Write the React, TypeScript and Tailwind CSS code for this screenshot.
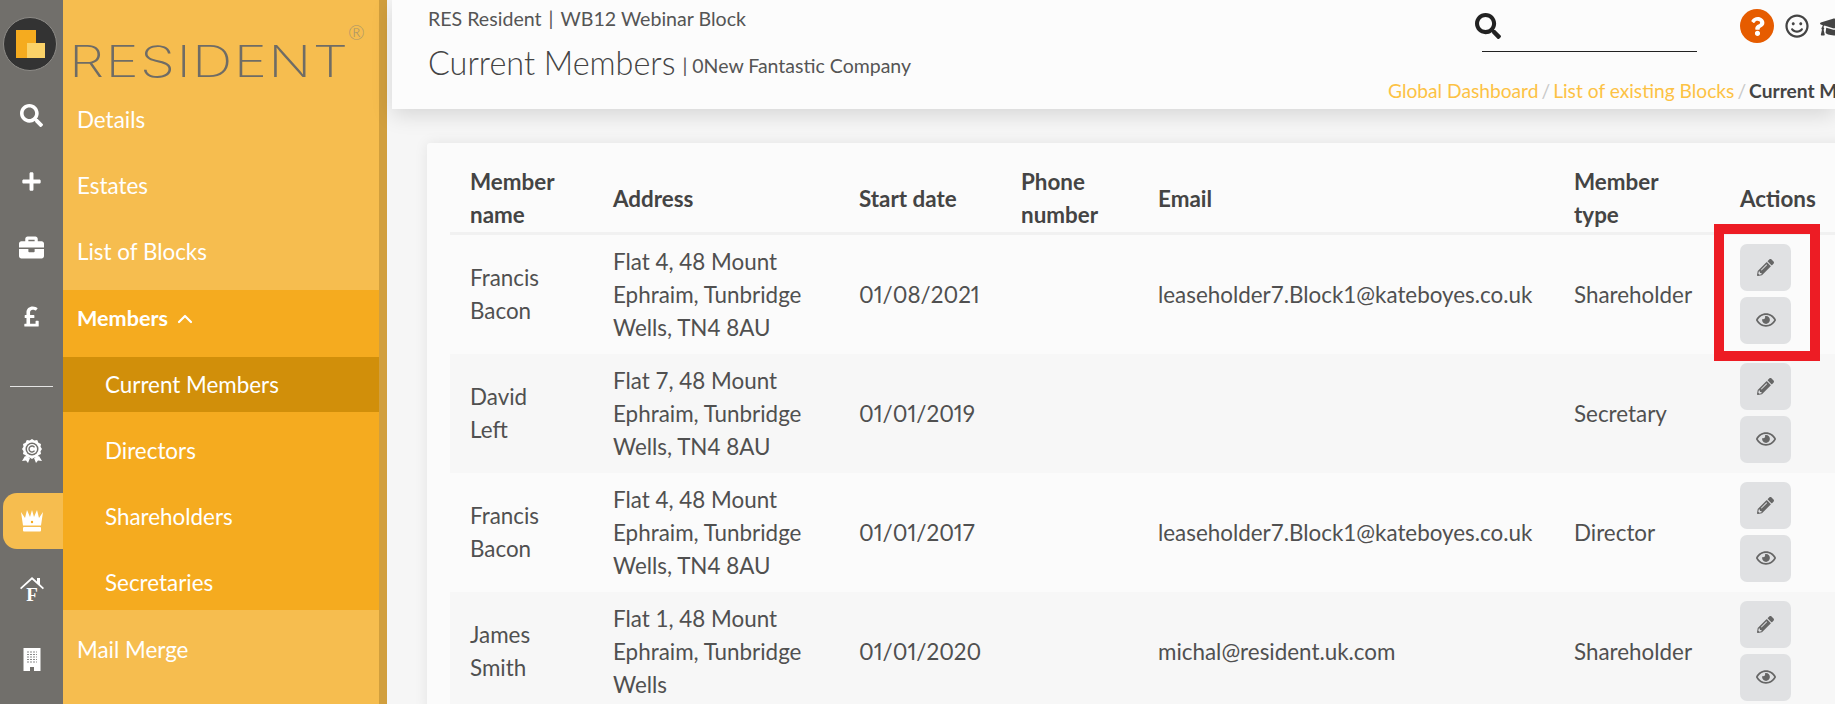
import { FaBriefcase, FaGraduationCap, FaPencilAlt, FaPlus, FaPoundSign, FaQuestion, FaRegEye, FaRegSmile, FaSearch } from 'react-icons/fa';
import { ChevronUp } from 'lucide-react';

const members = [
  { first: 'Francis', last: 'Bacon', flat: 'Flat 4', end: 'Wells, TN4 8AU', start: '01/08/2021', email: 'leaseholder7.Block1@kateboyes.co.uk', type: 'Shareholder' },
  { first: 'David', last: 'Left', flat: 'Flat 7', end: 'Wells, TN4 8AU', start: '01/01/2019', email: '', type: 'Secretary' },
  { first: 'Francis', last: 'Bacon', flat: 'Flat 4', end: 'Wells, TN4 8AU', start: '01/01/2017', email: 'leaseholder7.Block1@kateboyes.co.uk', type: 'Director' },
  { first: 'James', last: 'Smith', flat: 'Flat 1', end: 'Wells', start: '01/01/2020', email: 'michal@resident.uk.com', type: 'Shareholder' },
];

function AwardIcon() {
  return (
    <svg width="22" height="24" viewBox="0 0 22 24" fill="white">
      <path d="M11 0l2.400 1.600 2.800-.5 1.200 2.600 2.600 1.200-.5 2.800L21 10l-1.500 2.300.5 2.800-2.600 1.200-1.200 2.600-2.800-.5L11 20l-2.400-1.600-2.800.5-1.200-2.600L2 15.100l.5-2.800L1 10l1.500-2.300L2 4.900l2.600-1.200 1.200-2.600 2.800.5z" />
      <circle cx="11" cy="10" r="6.500" fill="#716f6b" />
      <circle cx="11" cy="10" r="5" fill="white" />
      <path d="M13.500 8.300a3 3 0 1 0 0 3.400" fill="none" stroke="#716f6b" strokeWidth="1.400" />
      <path d="M4 17l-3 5 4-.5 2 2.500 2-5zM18 17l3 5-4-.5-2 2.500-2-5z" />
    </svg>
  );
}

function HouseIcon() {
  return (
    <svg width="24" height="25" viewBox="0 0 24 25" fill="white">
      <path d="M0 12L12 1l5 4.500V2h3v6.300L24 12l-1.200 1.200L12 3.600 1.200 13.200z" />
      <text x="12" y="25" textAnchor="middle" fontFamily="Liberation Serif, serif" fontWeight="700" fontSize="19">F</text>
    </svg>
  );
}

function CrownIcon() {
  return (
    <svg width="24" height="22" viewBox="0 0 24 22" fill="white">
      <path d="M1 2l4 6 2-8 3 7 2-7 2 7 3-7 2 8 4-6-2 13.500H3z" />
      <circle cx="12" cy="12" r="1.200" fill="#f5ab1f" />
      <rect x="3" y="17" width="18" height="4.500" rx="1" />
    </svg>
  );
}

function BuildingIcon() {
  return (
    <svg width="18" height="24" viewBox="0 0 18 24">
      <rect width="17" height="23" x="0.500" fill="white" />
      <path d="M4 4h10M4 6.500h10M4 9h10M4 11.500h10M4 14h10" stroke="#8a8a8a" strokeWidth="1.200" strokeDasharray="2 1" />
      <rect x="7" y="19" width="4" height="4" fill="#716f6b" />
    </svg>
  );
}

function RailItem({ children, active = false }: { children: React.ReactNode; active?: boolean }) {
  return (
    <div className={active ? 'ml-[3px] flex h-[56px] items-center justify-center rounded-l-[14px] bg-[#f6bd4f] pr-[3px]' : 'flex h-[56px] items-center justify-center'}>
      {children}
    </div>
  );
}

function Rail() {
  return (
    <div className="flex w-[63px] shrink-0 flex-col bg-[#716f6b] text-white">
      <div className="mt-[17px] ml-[3px] flex h-[54px] w-[54px] items-center justify-center rounded-full border border-[#8d8b87] bg-[#333333]">
        <div className="relative h-[29px] w-[29px]">
          <div className="h-[28px] w-[20px] bg-[#f5ab1f]" />
          <div className="absolute right-0 bottom-[1px] h-[15px] w-[18px] bg-[#fbd268]" />
        </div>
      </div>
      <div className="mt-[16px] flex h-[56px] items-center justify-center"><FaSearch size={23} /></div>
      <div className="mt-[10px]"><RailItem><FaPlus size={21} /></RailItem></div>
      <div className="mt-[10px]"><RailItem><FaBriefcase size={25} /></RailItem></div>
      <div className="mt-[13px]"><RailItem><FaPoundSign size={23} /></RailItem></div>
      <div className="mx-[10px] mt-[42px] h-px bg-[#e4e4e4]" />
      <div className="mt-[36px]"><RailItem><AwardIcon /></RailItem></div>
      <div className="mt-[14px]"><RailItem active><CrownIcon /></RailItem></div>
      <div className="mt-[11px]"><RailItem><HouseIcon /></RailItem></div>
      <div className="mt-[16px]"><RailItem><BuildingIcon /></RailItem></div>
    </div>
  );
}

function NavItem({ label, sub = false, current = false, bold = false }: { label: string; sub?: boolean; current?: boolean; bold?: boolean }) {
  return (
    <div className={`flex h-[55px] items-start pt-[16px] leading-[24px] text-white ${sub ? 'pl-[42px]' : 'pl-[14px]'} ${current ? 'bg-[#d18f0a]' : ''} ${bold ? 'text-[21.6px] font-bold' : 'text-[22.4px]'}`}>
      {label}
      {bold && <ChevronUp className="ml-[5px] mt-[1px]" size={24} strokeWidth={2.2} />}
    </div>
  );
}

function Sidebar() {
  return (
    <div className="w-[324px] shrink-0 border-r-[8px] border-[#d19f3e] bg-[#f6bd4f]">
      <div className="relative h-[92px] pl-[6px] pt-[35px]">
        <div className="origin-left scale-x-[1.31] text-[43px] leading-[52px] font-extralight tracking-[1px] text-[#6f6c65] font-['Inter']">RESIDENT</div>
        <div className="absolute top-[17px] left-[285px] text-[20px] font-light text-[#a8946a]">®</div>
      </div>
      <div className="flex flex-col gap-[11px]">
        <NavItem label="Details" />
        <NavItem label="Estates" />
        <NavItem label="List of Blocks" />
        <div className="flex flex-col gap-[11px] bg-[#f5ab1f]">
          <div className="pb-px"><NavItem label="Members" bold /></div>
          <NavItem label="Current Members" sub current />
          <NavItem label="Directors" sub />
          <NavItem label="Shareholders" sub />
          <NavItem label="Secretaries" sub />
        </div>
        <div className="mt-px pb-[27px]"><NavItem label="Mail Merge" /></div>
      </div>
    </div>
  );
}

function Header() {
  return (
    <div className="ml-[5px] flex h-[109px] bg-[#fcfcfc] shadow-[0_6px_20px_rgba(0,0,0,0.13)]">
      <div className="w-[996px] shrink-0 pl-[36px] pt-[7px] text-[#555555]">
        <div className="text-[19.6px] leading-[24px]">RES Resident<span className="mx-[7px]">|</span>WB12 Webinar Block</div>
        <div className="mt-[13px] flex items-baseline">
          <span className="text-[32.4px] leading-[38px] font-light text-[#444444]">Current Members</span>
          <span className="ml-[7px] -translate-y-[2px] text-[19.5px]">| 0New Fantastic Company</span>
        </div>
      </div>
      <div className="min-w-0 flex-1 overflow-hidden">
        <div className="flex h-[63px]">
          <div className="relative w-[317px] shrink-0">
            <FaSearch className="absolute top-[13px] left-[87px] text-[#222222]" size={26} />
            <div className="absolute top-[51px] left-[94px] h-px w-[215px] bg-[#222222]" />
          </div>
          <div className="mt-[9px] ml-[35px] flex h-[34px] w-[34px] shrink-0 items-center justify-center rounded-full bg-[#e65c00] text-white"><FaQuestion size={19} /></div>
          <FaRegSmile className="mt-[14px] ml-[11px] shrink-0 text-[#444444]" size={24} />
          <FaGraduationCap className="mt-[13px] ml-[11px] shrink-0 text-[#444444]" size={28} />
        </div>
        <div className="mt-[16px] whitespace-nowrap text-[19.2px] leading-[24px] text-[#fcc244]">
          <span>Global Dashboard</span>
          <span className="mx-[3px] text-[#c8c8c8]">/</span>
          <span>List of existing Blocks</span>
          <span className="mx-[3px] text-[#c8c8c8]">/</span>
          <span className="font-bold text-[#444444]">Current Members</span>
        </div>
      </div>
    </div>
  );
}

function ActionButton({ children }: { children: React.ReactNode }) {
  return <div className="flex h-[47px] w-[51px] items-center justify-center rounded-[7px] bg-[#e0e1e3] text-[#666666]">{children}</div>;
}

function MemberTable() {
  return (
    <div className="mt-[34px] ml-[40px] mr-[-20px] overflow-hidden rounded-t-[3px] bg-[#fbfbfb] pl-[23px] pt-[22px] shadow-[0_0_14px_rgba(0,0,0,0.08)]">
      <table className="w-full table-fixed border-collapse text-left text-[22.4px] leading-[33px] text-[#505050]">
        <colgroup>
          <col className="w-[139px]" />
          <col className="w-[246px]" />
          <col className="w-[162px]" />
          <col className="w-[137px]" />
          <col className="w-[416px]" />
          <col className="w-[167px]" />
          <col />
        </colgroup>
        <thead>
          <tr className="h-[68px] border-b-[3px] border-[#f1f1f1] align-middle text-[#444444]">
            <th className="pl-[20px] font-bold">Member name</th>
            <th className="pl-[24px] font-bold">Address</th>
            <th className="pl-[24px] font-bold">Start date</th>
            <th className="pl-[24px] font-bold">Phone number</th>
            <th className="pl-[24px] font-bold">Email</th>
            <th className="pl-[24px] font-bold">Member<br />type</th>
            <th className="pl-[23px] font-bold">Actions</th>
          </tr>
        </thead>
        <tbody>
          {members.map((m, i) => (
            <tr key={i} className={i % 2 === 0 ? 'bg-[#fbfbfb]' : 'bg-[#f7f7f7]'}>
              <td className="pl-[20px]">{m.first}<br />{m.last}</td>
              <td className="pl-[24px]">{m.flat}, 48 Mount<br />Ephraim, Tunbridge<br />{m.end}</td>
              <td className="pl-[24px] proportional-nums">{m.start}</td>
              <td className="pl-[24px]" />
              <td className="pl-[24px]">{m.email}</td>
              <td className="pl-[24px]">{m.type}</td>
              <td className="pl-[23px]">
                <div className="flex flex-col gap-[6px] pt-[9px] pb-[10px]">
                  <ActionButton><FaPencilAlt size={17} /></ActionButton>
                  <ActionButton><FaRegEye size={20} /></ActionButton>
                </div>
              </td>
            </tr>
          ))}
        </tbody>
      </table>
    </div>
  );
}

export default function App() {
  return (
    <div className="relative flex h-[704px] w-[1835px] overflow-hidden bg-[#f6f6f6] font-['Lato',sans-serif]">
      <Rail />
      <Sidebar />
      <div className="min-w-0 flex-1">
        <Header />
        <MemberTable />
      </div>
      {/* annotation box drawn over the screenshot */}
      <div className="absolute top-[224px] left-[1714px] h-[137px] w-[106px] border-[10px] border-[#ed1c24]" />
    </div>
  );
}
